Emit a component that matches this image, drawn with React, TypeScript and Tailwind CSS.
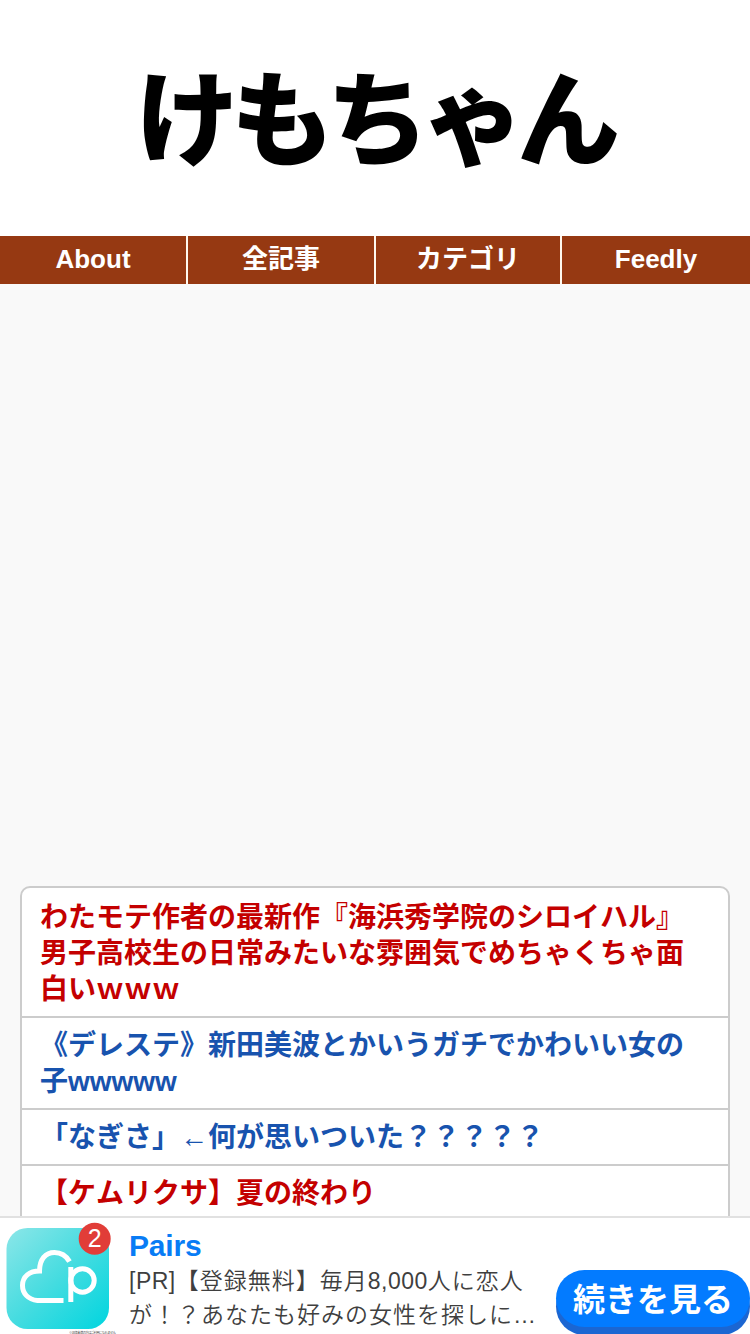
const NAV_ITEMS = ["About", "全記事", "カテゴリ", "Feedly"];

type Article = {
  title: string;
  hot: boolean;
};

const ARTICLES: Article[] = [
  {
    title:
      "わたモテ作者の最新作『海浜秀学院のシロイハル』男子高校生の日常みたいな雰囲気でめちゃくちゃ面白いｗｗｗ",
    hot: true,
  },
  {
    title: "《デレステ》新田美波とかいうガチでかわいい女の子wwwww",
    hot: false,
  },
  { title: "「なぎさ」←何が思いついた？？？？？", hot: false },
  { title: "【ケムリクサ】夏の終わり", hot: true },
];

function Header() {
  return (
    <header className="flex h-[236px] shrink-0 items-center justify-center bg-white pr-0.5 pb-2.5">
      <h1 className="font-['Noto_Sans_CJK_JP',sans-serif] text-[103px] leading-none font-black tracking-[-7.7px] whitespace-nowrap text-black">
        けもちゃん
      </h1>
    </header>
  );
}

function Nav() {
  return (
    <nav className="grid h-12 shrink-0 grid-cols-[188px_188px_186px_188px] bg-[#963912]">
      {NAV_ITEMS.map((item) => (
        <a
          key={item}
          href="#"
          className="flex items-center justify-center border-r-2 border-[#fff8ee] pb-0.5 text-[26px] leading-none font-bold text-white last:border-r-0"
        >
          {item}
        </a>
      ))}
    </nav>
  );
}

function ArticleList() {
  return (
    <ul className="mx-5 mt-[602px] rounded-[10px] border-2 border-[#ccc] bg-white pb-10">
      {ARTICLES.map((article) => (
        <li
          key={article.title}
          className="border-t-2 border-[#ccc] px-[18px] pt-2.5 pb-2 first:border-transparent"
        >
          <a
            href="#"
            className={`block text-[28px] leading-9 font-bold ${
              article.hot ? "text-[#c40000]" : "text-[#1853ae]"
            }`}
          >
            {article.title}
          </a>
        </li>
      ))}
    </ul>
  );
}

function PairsIcon() {
  return (
    <svg width="120" height="116" viewBox="0 0 120 116" className="shrink-0">
      <defs>
        <linearGradient id="pairs" x1="0" y1="0" x2="1" y2="1">
          <stop offset="0" stopColor="#8ce6e8" />
          <stop offset="0.5" stopColor="#45dce0" />
          <stop offset="1" stopColor="#00d5df" />
        </linearGradient>
      </defs>
      <rect x="6.5" y="10" width="102.5" height="101" rx="21" fill="url(#pairs)" />
      <g fill="none" stroke="#fff" strokeWidth="5">
        <path d="M63.5 82.500H37.500C28 81.500 22.500 75.500 22.500 67.500C22.500 58.500 29.500 53 39.500 53C39.500 41.500 45.500 34.500 54.500 34.500C61 34.500 66 37.500 69.500 43.500" />
        <path d="M70.8 49V84" />
        <circle cx="82.5" cy="62.5" r="11.7" />
      </g>
      <circle cx="94.7" cy="20.7" r="16" fill="#e13d38" />
      <text
        x="94.7"
        y="28.5"
        textAnchor="middle"
        fontSize="25"
        fill="#fff"
        fontFamily="Liberation Sans, sans-serif"
      >
        2
      </text>
      <text
        x="69"
        y="115.5"
        fontSize="3.2"
        textLength="47"
        fill="#444"
        fontFamily="Noto Sans CJK JP, sans-serif"
      >
        ※18歳未満の方はご利用になれません
      </text>
    </svg>
  );
}

function AdBanner() {
  return (
    <aside className="fixed inset-x-0 bottom-0 flex h-[118px] overflow-hidden border-t-2 border-[#e1e1e1] bg-white">
      <PairsIcon />
      <div className="ml-[9px] w-[420px] shrink-0 pt-[10px]">
        <p className="text-[30px] leading-9 font-bold tracking-[-0.2px] text-[#087cf5]">
          Pairs
        </p>
        <p className="text-[23px] leading-[34px] font-[350] tracking-[1px] whitespace-nowrap text-[#3f3f3f]">
          <span className="tracking-[0.5px]">[PR]</span>【登録無料】毎月
          <span className="tracking-[0.5px]">8,000</span>人に恋人
          <br />
          が！？あなたも好みの女性を探しに…
        </p>
      </div>
      <a
        href="#"
        className="mt-[52px] ml-[7px] flex h-[57px] w-[194px] shrink-0 items-center justify-center rounded-[29px] bg-[#037bff] pt-0.5 text-[32px] leading-none font-bold text-white shadow-[0_8px_0_#1b66d2]"
      >
        続きを見る
      </a>
    </aside>
  );
}

export default function App() {
  return (
    <div className="flex h-[1334px] flex-col overflow-hidden bg-[#f9f9f9] font-['Liberation_Sans','Noto_Sans_CJK_JP',sans-serif] [font-kerning:none]">
      <Header />
      <Nav />
      <ArticleList />
      <AdBanner />
    </div>
  );
}
